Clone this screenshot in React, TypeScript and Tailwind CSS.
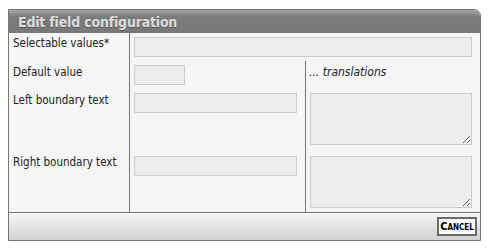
import React from 'react';

const font = { fontFamily: '"DejaVu Sans Condensed", "DejaVu Sans", sans-serif' };

const fieldCls = 'block bg-[#ededed] border border-[#cccccc] outline-none';

export default function App() {
	return (
		<div className="w-[488px] h-[249px] bg-white pl-2 pt-[9px]" style={font}>
			<div className="w-[473px] border border-[#777777] rounded-tr-[7px] overflow-hidden bg-[#f5f5f5]">
				<div className="h-[23px] bg-gradient-to-b from-[#a5a5a5] via-[#7b7b7b] via-30% to-[#787878] pl-[9px] flex items-center">
					<span className="text-[14px] font-bold text-[#dcdcdc] leading-none [text-shadow:0_1px_0_#5a5a5a] tracking-[-0.2px]">
						Edit field configuration
					</span>
				</div>

				<div className="grid grid-cols-[121px_176px_174px] grid-rows-[28px_28px_62px_61px] text-[11.5px] text-[#222] leading-[14px]">
					<div className="border-r border-[#777777] pl-1 pt-[3px]">Selectable values*</div>
					<div className="col-span-2 pl-1 pt-1">
						<input className={`${fieldCls} w-[338px] h-5`} />
					</div>

					<div className="border-r border-[#777777] pl-1 pt-[4px]">Default value</div>
					<div className="border-r border-[#777777] pl-1 pt-1">
						<input className={`${fieldCls} w-[51px] h-5`} />
					</div>
					<div className="pl-[3px] pt-[4px] italic text-[12px]">... translations</div>

					<div className="border-r border-[#777777] pl-1 pt-[4px]">Left boundary text</div>
					<div className="border-r border-[#777777] pl-1 pt-1">
						<input className={`${fieldCls} w-[163px] h-5`} />
					</div>
					<div className="pl-1 pt-1">
						<textarea className={`${fieldCls} w-[162px] h-[52px] resize`} />
					</div>

					<div className="border-r border-[#777777] pl-1 pt-[4px]">Right boundary text</div>
					<div className="border-r border-[#777777] pl-1 pt-[5px]">
						<input className={`${fieldCls} w-[163px] h-5`} />
					</div>
					<div className="pl-1 pt-[5px]">
						<textarea className={`${fieldCls} w-[162px] h-[52px] resize`} />
					</div>
				</div>

				<div className="h-[28px] border-t border-[#777777] bg-gradient-to-b from-[#f6f6f6] to-[#d2d2d2] flex items-center justify-end pr-[3px]">
					<button className="h-[19px] w-[40px] border-2 border-[#6a6a6a] bg-[#fafafa] text-[11px] font-bold text-black leading-none [font-variant:small-caps]">
						Cancel
					</button>
				</div>
			</div>
		</div>
	);
}
